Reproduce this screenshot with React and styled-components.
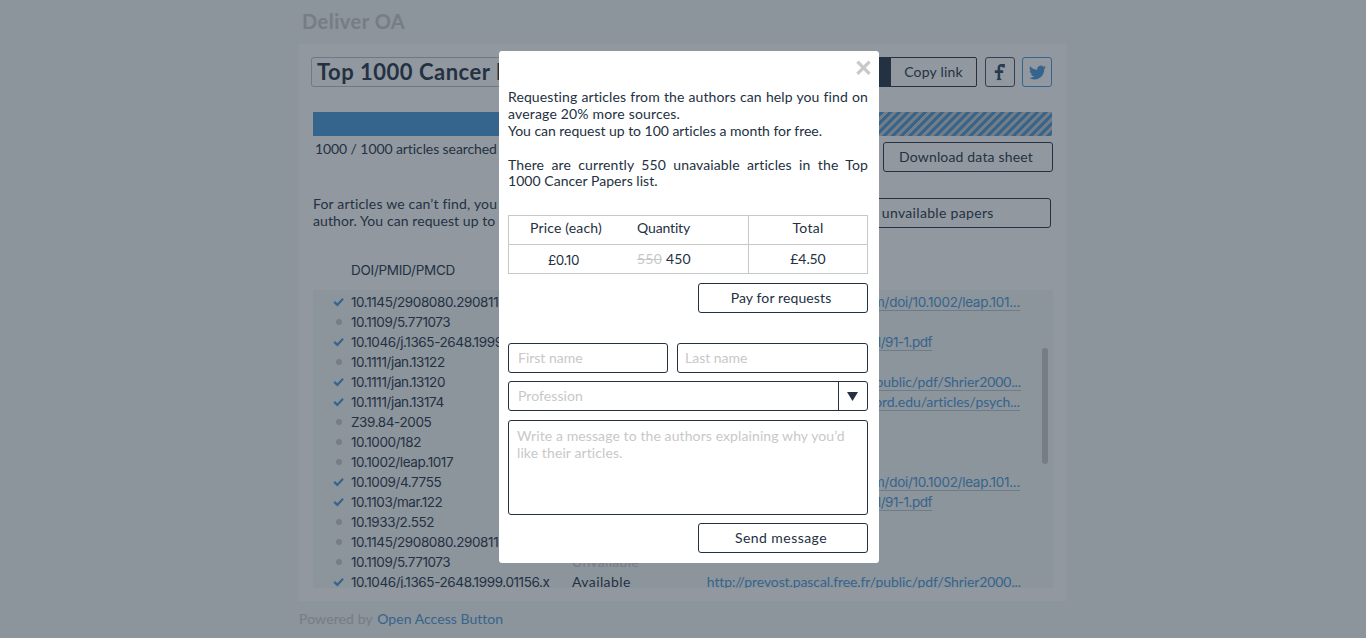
import React from 'react';
import styled, { createGlobalStyle } from 'styled-components';

const ink = '#233142';
const blue = '#4797d6';
const muted = '#c8c8c8';

const Global = createGlobalStyle`
  *, *::before, *::after { box-sizing: border-box; }
  body {
    margin: 0;
    background: #f5f6f7;
    color: ${ink};
    font: 14px/17px Lato, "Liberation Sans", sans-serif;
    overflow: hidden;
  }
  button, input, textarea { font: inherit; color: inherit; }
`;

const Page = styled.div`
  width: 768px;
  height: 638px;
  margin-left: 299px;
  display: flex;
  flex-direction: column;
`;

const Brand = styled.h1`
  margin: 0;
  height: 44px;
  padding-left: 3px;
  font-size: 20px;
  line-height: 43px;
  font-weight: 700;
  letter-spacing: 0.5px;
  color: ${muted};
`;

const Card = styled.main`
  height: 557px;
  padding: 13px 14px 13px 12px;
  background: #fff;
  border-radius: 2px;
`;

const Header = styled.header`
  display: flex;
  height: 30px;
  padding-right: 1px;
`;

const TitleField = styled.div`
  width: 400px;
  padding-left: 5px;
  border: 1px solid #bdbfc2;
  border-radius: 3px;
  font-size: 22px;
  font-weight: 700;
  line-height: 27px;
  letter-spacing: 0.5px;
  white-space: nowrap;
  overflow: hidden;
`;

const ShareBox = styled.div`
  margin-left: auto;
  width: 220px;
  display: flex;
  border: 1px solid ${ink};
  border-radius: 2px;
`;

const ShareUrl = styled.div`
  width: 133px;
  background: ${ink};
`;

const CopyLink = styled.div`
  flex: 1;
  text-align: center;
  line-height: 28px;
  letter-spacing: 0.2px;
`;

const SocialButton = styled.div`
  width: 30px;
  margin-left: ${p => p.$gap}px;
  display: flex;
  align-items: center;
  justify-content: center;
  border: 1px solid ${p => p.$color};
  border-radius: 3px;
  color: ${p => p.$color};
`;

const Progress = styled.div`
  display: flex;
  height: 24px;
  margin: 25px 1px 0 2px;
`;

const Done = styled.div`
  width: 300px;
  background: ${blue};
`;

const Pending = styled.div`
  flex: 1;
  background: repeating-linear-gradient(135deg, ${blue} 0 2.4px, ${muted} 3.1px 5.4px, ${blue} 6.1px);
`;

const Line = styled.div`
  display: flex;
  justify-content: space-between;
  align-items: flex-start;
  margin-top: ${p => p.$top}px;
  padding-left: ${p => p.$left}px;
  padding-right: ${p => p.$right || 0}px;
`;

const Copy = styled.p`
  margin: ${p => p.$top || 0}px 0 0;
  letter-spacing: ${p => p.$ls || 0}px;
  white-space: nowrap;
`;

const Button = styled.button`
  display: block;
  width: ${p => p.$w || 170}px;
  height: 30px;
  padding: 0 ${p => p.$shift || 4}px 0 0;
  background: transparent;
  border: 1px solid ${ink};
  border-radius: 3px;
  line-height: 28px;
  text-align: center;
  white-space: nowrap;
  letter-spacing: ${p => p.$ls || 0}px;
`;

const ColumnHead = styled.div`
  margin: 33px 0 0 40px;
  font: 13.5px/17px Inter, sans-serif;
  letter-spacing: -0.27px;
`;

const List = styled.div`
  position: relative;
  height: 298px;
  margin: 11px 0 0 2px;
  padding-top: 2px;
  background: #f5f6f7;
  overflow: hidden;
`;

const Row = styled.div`
  display: grid;
  grid-template-columns: 18px 221px 135px 1fr;
  height: 20px;
  padding-left: 20px;
  align-items: center;
  white-space: nowrap;
`;

const Doi = styled.span`
  font: 13.5px/20px Inter, sans-serif;
  letter-spacing: -0.4px;
`;

const Status = styled.span`
  padding-bottom: 2px;
  letter-spacing: ${p => (p.$ok ? 0.4 : 0.31)}px;
  color: ${p => (p.$ok ? ink : muted)};
`;

const Link = styled.a`
  justify-self: start;
  display: flex;
  justify-content: flex-end;
  width: ${p => p.$w}px;
  height: 17px;
  line-height: ${p => (p.$digits ? 17 : 15)}px;
  border-bottom: 1px solid #b9c4cf;
  color: ${blue};
  font-family: ${p => (p.$digits ? 'Inter' : 'Lato')}, sans-serif;
  font-size: ${p => (p.$digits ? 13.5 : 14)}px;
  letter-spacing: ${p => p.$ls}px;
`;

const Dot = styled.i`
  width: 6px;
  height: 6px;
  margin-left: 3px;
  border-radius: 50%;
  background: ${muted};
`;

const Thumb = styled.div`
  position: absolute;
  right: 5px;
  top: 58px;
  width: 6px;
  height: 116px;
  border-radius: 3px;
  background: ${muted};
`;

const Footer = styled.footer`
  margin-top: 9px;
  color: ${muted};
  letter-spacing: 0.12px;
  a { color: ${blue}; margin-left: 1px; letter-spacing: 0.04px; }
`;

const Overlay = styled.div`
  position: fixed;
  inset: 0;
  padding: 51px 0 0 499px;
  background: rgba(35, 49, 66, 0.5);
`;

const Modal = styled.section`
  position: relative;
  width: 380px;
  height: 512px;
  padding: 37px 11px 10px 9px;
  background: #fff;
  border-radius: 3px;
`;

const Close = styled.svg`
  position: absolute;
  top: 9px;
  right: 8px;
`;

const Para = styled.p`
  margin: 0 0 ${p => p.$gap || 0}px;
  line-height: ${p => p.$lh || 17}px;
  letter-spacing: ${p => p.$ls || 0}px;
  white-space: nowrap;
  text-align: ${p => (p.$full ? 'justify' : 'left')};
  text-align-last: ${p => (p.$full ? 'justify' : 'left')};
`;

const PriceTable = styled.div`
  display: grid;
  grid-template-columns: 117px 122px 1fr;
  grid-template-rows: 28px 1px 28px;
  margin-top: 26px;
  border: 1px solid ${muted};
`;

const Cell = styled.div`
  display: flex;
  align-items: center;
  justify-content: ${p => (p.$start ? 'flex-start' : 'center')};
  padding-top: ${p => (p.$digits ? 2 : 0)}px;
  padding-bottom: ${p => (p.$head ? 5 : p.$digits ? 0 : 1)}px;
  padding-left: ${p => p.$left || 0}px;
  padding-right: ${p => p.$right || 0}px;
  border-left: ${p => (p.$rule ? `1px solid ${muted}` : '0')};
  letter-spacing: ${p => p.$ls || 0}px;
  font-family: ${p => (p.$digits ? 'Inter' : 'Lato')}, sans-serif;
  font-size: ${p => (p.$digits ? 13.5 : 14)}px;
  s { color: ${muted}; margin-right: 4px; }
`;

const RuleLine = styled.div`
  grid-column: 1 / -1;
  background: ${muted};
`;

const Actions = styled.div`
  display: flex;
  justify-content: flex-end;
  margin-top: ${p => p.$top}px;
`;

const Fields = styled.div`
  display: grid;
  grid-template-columns: 160px 191px;
  gap: 9px;
  margin-top: 30px;
`;

const Input = styled.input`
  width: 100%;
  height: 30px;
  padding: 0 0 1px ${p => p.$left}px;
  border: 1px solid ${ink};
  border-radius: 3px;
  outline: 0;
  &::placeholder { color: ${muted}; opacity: 1; }
`;

const Select = styled.div`
  display: flex;
  height: 30px;
  margin-top: 8px;
  border: 1px solid ${ink};
  border-radius: 3px;
  color: ${muted};
  line-height: 27px;
  letter-spacing: 0.08px;
  padding-left: 9px;
`;

const Arrow = styled.div`
  display: flex;
  align-items: center;
  justify-content: center;
  width: 29px;
  margin-left: auto;
  padding-right: 2px;
  border-left: 1px solid ${ink};
`;

const Message = styled.textarea`
  display: block;
  width: 100%;
  height: 95px;
  margin-top: 9px;
  padding: 6px 8px;
  border: 1px solid ${ink};
  border-radius: 3px;
  resize: none;
  outline: 0;
  line-height: 17px;
  letter-spacing: 0.1px;
  &::placeholder { color: ${muted}; opacity: 1; }
`;

const Check = () => (
  <svg width="12" height="10" viewBox="0 0 12 10" fill="none">
    <path d="M1.2 4.9 4.3 7.9 10 1.8" stroke={blue} strokeWidth="2.2" />
  </svg>
);

const wiley = { text: 'http://onlinelibrary.wiley.com/doi/10.1002/leap.101...', w: 313, digits: true, ls: -0.29 };
const short = { text: 'http://psycnet.apa.org/1/91-1.pdf', w: 225, digits: true, ls: -0.5 };
const shrier = { text: 'http://prevost.pascal.free.fr/public/pdf/Shrier2000...', w: 314, ls: -0.1 };
const oxford = { text: 'http://academic.oxford.edu/articles/psych...', w: 313, ls: -0.08 };

const rows = [
  ['10.1145/2908080.2908114', wiley],
  ['10.1109/5.771073'],
  ['10.1046/j.1365-2648.1999.01156.x', short],
  ['10.1111/jan.13122'],
  ['10.1111/jan.13120', shrier],
  ['10.1111/jan.13174', oxford],
  ['Z39.84-2005'],
  ['10.1000/182'],
  ['10.1002/leap.1017'],
  ['10.1009/4.7755', wiley],
  ['10.1103/mar.122', short],
  ['10.1933/2.552'],
  ['10.1145/2908080.2908114'],
  ['10.1109/5.771073'],
  ['10.1046/j.1365-2648.1999.01156.x', shrier],
];

export default function App() {
  return (
    <>
      <Global />
      <Page>
        <Brand>Deliver OA</Brand>
        <Card>
          <Header>
            <TitleField>Top 1000 Cancer Papers</TitleField>
            <ShareBox>
              <ShareUrl />
              <CopyLink>Copy link</CopyLink>
            </ShareBox>
            <SocialButton $gap={8} $color="#3b4b60">
              <svg width="12" height="18" viewBox="0 0 12 18" fill="none" stroke="#2b4763">
                <path d="M9.6 4.4V2.4H7.6Q4.9 2.2 4.9 4.8V16M0.8 8.6H9.2" strokeWidth="2.6" />
                <path d="M2.8 16.4H7.4" strokeWidth="1.4" />
              </svg>
            </SocialButton>
            <SocialButton $gap={7} $color={blue}>
              <svg width="17" height="17" viewBox="0 0 24 24" fill="currentColor">
                <path d="M23.95 4.57a10 10 0 0 1-2.82.77 4.96 4.96 0 0 0 2.16-2.72c-.95.55-2 .95-3.13 1.19a4.92 4.92 0 0 0-8.38 4.48C7.69 8.1 4.07 6.13 1.64 3.16a4.92 4.92 0 0 0 1.52 6.57 4.9 4.9 0 0 1-2.23-.61v.06a4.92 4.92 0 0 0 3.95 4.83 5 5 0 0 1-2.21.08 4.94 4.94 0 0 0 4.6 3.42A9.87 9.87 0 0 1 0 19.54a14 14 0 0 0 7.55 2.21c9.05 0 14-7.5 14-13.98 0-.21 0-.42-.02-.63a9.94 9.94 0 0 0 2.46-2.55z" />
              </svg>
            </SocialButton>
          </Header>
          <Progress>
            <Done />
            <Pending />
          </Progress>
          <Line $top={6} $left={4}>
            <Copy $ls={-0.09} $top={-2}>1000 / 1000 articles searched</Copy>
            <Button $ls={0.17}>Download data sheet</Button>
          </Line>
          <Line $top={26} $left={2} $right={2}>
            <div>
              <Copy $ls={0.18} $top={-3}>For articles we can’t find, you can</Copy>
              <Copy $ls={0.08}>author. You can request up to 100</Copy>
            </div>
            <Button $w={290} $ls={0.33} $shift={11}>Request all unvailable papers</Button>
          </Line>
          <ColumnHead>DOI/PMID/PMCD</ColumnHead>
          <List>
            {rows.map(([doi, link], i) => (
              <Row key={i}>
                {link ? <Check /> : <Dot />}
                <Doi>{doi}</Doi>
                <Status $ok={!!link}>{link ? 'Available' : 'Unvailable'}</Status>
                {link && <Link $w={link.w} $digits={link.digits} $ls={link.ls}>{link.text}</Link>}
              </Row>
            ))}
            <Thumb />
          </List>
        </Card>
        <Footer>Powered by <a>Open Access Button</a></Footer>
      </Page>
      <Overlay>
        <Modal>
          <Close width="15" height="15" viewBox="0 0 15 15">
            <path d="M1.4 1.6 13.6 13.8M13.6 1.6 1.4 13.8" stroke={muted} strokeWidth="3.2" />
          </Close>
          <Para $full $ls={0.1}>Requesting articles from the authors can help you find on</Para>
          <Para $ls={0.18}>average 20% more sources.</Para>
          <Para $ls={-0.03} $gap={17}>You can request up to 100 articles a month for free.</Para>
          <Para $full $ls={0.1}>There are currently 550 unavaiable articles in the Top</Para>
          <Para $lh={16} $ls={0.04}>1000 Cancer Papers list.</Para>
          <PriceTable>
            <Cell $head $right={3} $ls={0.17}>Price (each)</Cell>
            <Cell $head $start $left={11} $ls={-0.14}>Quantity</Cell>
            <Cell $head $rule $ls={0.27}>Total</Cell>
            <RuleLine />
            <Cell $digits $right={8} $ls={-0.4}>£0.10</Cell>
            <Cell $start $left={11} $ls={0.2}><s>550</s>450</Cell>
            <Cell $rule $ls={-0.1}>£4.50</Cell>
          </PriceTable>
          <Actions $top={9}><Button $ls={0.12}>Pay for requests</Button></Actions>
          <Fields>
            <Input $left={9} placeholder="First name" />
            <Input $left={7} placeholder="Last name" />
          </Fields>
          <Select>
            Profession
            <Arrow>
              <svg width="11" height="9" viewBox="0 0 11 9"><path d="M0 0H11L5.5 9Z" fill={ink} /></svg>
            </Arrow>
          </Select>
          <Message placeholder={'Write a message to the authors explaining why you’d\nlike their articles.'} />
          <Actions $top={8}><Button $ls={0.44}>Send message</Button></Actions>
        </Modal>
      </Overlay>
    </>
  );
}
